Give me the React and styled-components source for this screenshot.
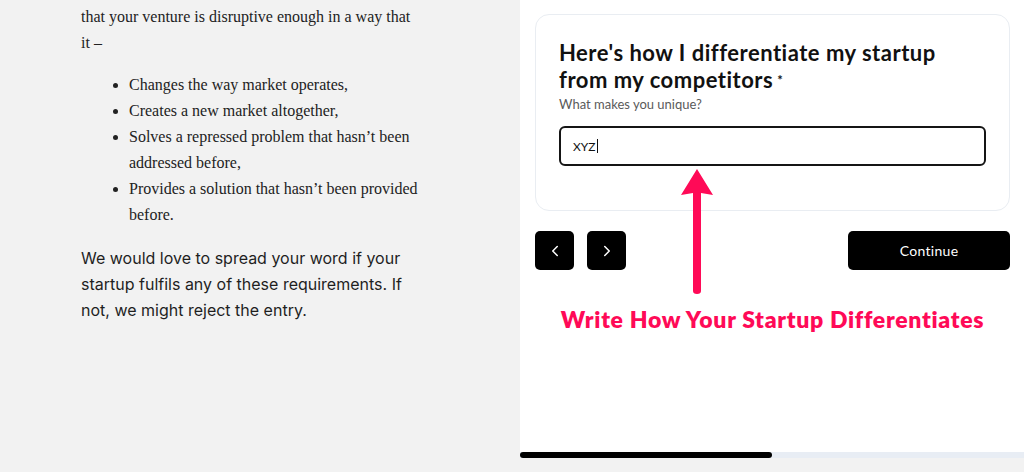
import React from 'react'
import styled, { createGlobalStyle } from 'styled-components'
import { ChevronLeft, ChevronRight } from 'lucide-react'

const GlobalStyle = createGlobalStyle`
  html, body {
    margin: 0;
    padding: 0;
    background: #f2f2f2;
  }
  * { box-sizing: border-box; }
`

const Page = styled.div`
  display: grid;
  grid-template-columns: 520px 504px;
  width: 1024px;
  height: 472px;
  overflow: hidden;
`

const Article = styled.div`
  padding: 4px 0 0 81px;
  color: #222;
  font-family: "Liberation Serif", "Times New Roman", serif;
  font-size: 16px;
  line-height: 26px;
  .lead{
    margin: 0;
    width: 335px;
  }
  .points{
    margin: 16px 0 0;
    padding-left: 48px;
    width: 345px;
  }
  .note{
    font-family: Inter, "Liberation Sans", sans-serif;
    margin: 17px 0 0;
    width: 335px;
    color: #1f1f1f;
  }
`

const Panel = styled.div`
  position: relative;
  display: flex;
  flex-direction: column;
  height: 458px;
  background: #fff;
`

const Body = styled.div`
  flex: 1;
  padding: 14px 14px 0 15px;
  font-family: Lato, "Open Sans", sans-serif;
`

const Card = styled.div`
  border: 1px solid #e9edf2;
  border-radius: 14px;
  padding: 24px 23px 44px;
  .title{
    margin: 0;
    max-width: 392px;
    font-size: 22px;
    line-height: 27px;
    font-weight: 700;
    color: #111;
    letter-spacing: 0.5px;
    sup{
      font-size: 13px;
      line-height: 0;
      vertical-align: 3px;
      margin-left: 4px;
    }
  }
  .hint{
    margin: 3px 0 0;
    font-size: 13px;
    color: #5a5a5a;
  }
`

const Field = styled.div`
  display: flex;
  align-items: center;
  margin-top: 14px;
  height: 40px;
  border: 2px solid #151515;
  border-radius: 6px;
  padding: 0 12px;
  font-size: 12px;
  color: #111;
  .caret{
    display: inline-block;
    width: 1px;
    height: 14px;
    background: #111;
    margin-left: 1px;
  }
`

const Actions = styled.div`
  display: flex;
  align-items: center;
  gap: 13px;
  margin-top: 20px;
`

const NavBtn = styled.button`
  display: inline-flex;
  align-items: center;
  justify-content: center;
  width: 39px;
  height: 39px;
  padding: 0;
  border: 0;
  border-radius: 5px;
  background: #000;
  color: #fff;
`

const ContinueBtn = styled.button`
  margin-left: auto;
  width: 162px;
  height: 39px;
  border: 0;
  border-radius: 5px;
  background: #000;
  color: #fff;
  font-family: Lato, "Open Sans", sans-serif;
  font-size: 14px;
  font-weight: 400;
  letter-spacing: 0.3px;
`

const Label = styled.p`
  margin: 35px 0 0;
  text-align: center;
  color: #ff0a57;
  font-size: 23px;
  font-weight: 800;
  letter-spacing: 0.7px;
`

const Pointer = styled.svg`
  position: absolute;
  left: 160px;
  top: 167px;
`

const Track = styled.div`
  height: 6px;
  background: #e8edf4;
`

const Fill = styled.div`
  height: 6px;
  border-radius: 3px;
  background: #000;
`

const App = () => {
  const progress = 50
  return (
    <>
      <GlobalStyle />
      <Page>
        <Article>
          <p className='lead'>that your venture is disruptive enough in a way that it –</p>
          <ul className='points'>
            <li>Changes the way market operates,</li>
            <li>Creates a new market altogether,</li>
            <li>Solves a repressed problem that hasn’t been addressed before,</li>
            <li>Provides a solution that hasn’t been provided before.</li>
          </ul>
          <p className='note'>We would love to spread your word if your startup fulfils any of these requirements. If not, we might reject the entry.</p>
        </Article>
        <Panel>
          <Body>
            <Card>
              <h3 className='title'>Here's how I differentiate my startup from my competitors<sup>*</sup></h3>
              <p className='hint'>What makes you unique?</p>
              <Field>XYZ<span className='caret'></span></Field>
            </Card>
            <Actions>
              <NavBtn type='button'><ChevronLeft size={18} strokeWidth={2} /></NavBtn>
              <NavBtn type='button'><ChevronRight size={18} strokeWidth={2} /></NavBtn>
              <ContinueBtn type='button'>Continue</ContinueBtn>
            </Actions>
            <Label>Write How Your Startup Differentiates</Label>
          </Body>
          <Pointer width='34' height='128' viewBox='0 0 34 128'>
            <path d='M17 2 L33 28 L21 26 L21 124 Q21 127 17 127 Q13 127 13 124 L13 26 L1 28 Z' fill='#ff0a57' />
          </Pointer>
          <Track>
            <Fill style={{ width: `${progress}%` }} />
          </Track>
        </Panel>
      </Page>
    </>
  )
}

export default App
